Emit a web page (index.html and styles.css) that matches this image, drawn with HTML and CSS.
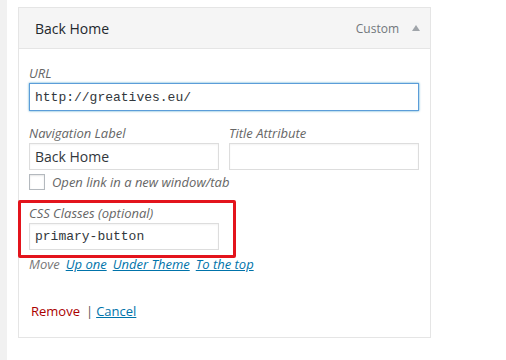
FILE: index.html
```html
<!DOCTYPE html>
<html lang="en">
<head>
    <meta charset="UTF-8">
    <meta name="viewport" content="width=device-width, initial-scale=1.0">
    <title>Menu Item</title>
    <link rel="stylesheet" href="styles.css">
</head>
<body>
    <div class="page">
        <div class="menu-item">
            <div class="item-bar">
                <span class="item-title">Back Home</span>
                <span class="item-controls">
                    <span class="item-type">Custom</span>
                    <span class="item-arrow"></span>
                </span>
            </div>

            <div class="item-settings">
                <div class="field field-wide">
                    <label class="field-label">URL</label>
                    <input type="text" class="field-input mono focused" value="http://greatives.eu/">
                </div>

                <div class="field-row">
                    <div class="field">
                        <label class="field-label">Navigation Label</label>
                        <input type="text" class="field-input" value="Back Home">
                    </div>
                    <div class="field">
                        <label class="field-label">Title Attribute</label>
                        <input type="text" class="field-input" value="">
                    </div>
                </div>

                <label class="check-line">
                    <span class="checkbox"></span>
                    <span>Open link in a new window/tab</span>
                </label>

                <div class="highlight">
                    <label class="field-label">CSS Classes (optional)</label>
                    <input type="text" class="field-input mono" value="primary-button">
                </div>

                <div class="move-line">
                    <span class="move-label">Move</span>
                    <a href="#">Up one</a>
                    <a href="#">Under Theme</a>
                    <a href="#">To the top</a>
                </div>

                <div class="actions">
                    <a href="#" class="remove">Remove</a>
                    <span class="sep">|</span>
                    <a href="#" class="cancel">Cancel</a>
                </div>
            </div>
        </div>
    </div>
</body>
</html>
```

FILE: styles.css
```css
* {
    box-sizing: border-box;
    margin: 0;
    padding: 0;
}

body {
    background-color: #f1f1f1;
    font-family: "Open Sans", sans-serif;
    color: #444;
}

.page {
    margin-left: 7px;
    min-height: 100vh;
    background-color: #fff;
    padding: 7px 0 0 11px;
}

.menu-item {
    width: 413px;
    height: 331px;
    border: 1px solid #e5e5e5;
    background-color: #fff;
}

/* header bar */
.item-bar {
    display: flex;
    justify-content: space-between;
    align-items: center;
    height: 41px;
    padding: 0 10px 0 16px;
    background-color: #f5f5f5;
    border-bottom: 1px solid #e5e5e5;
}

.item-title {
    font-size: 14px;
    color: #23282d;
}

.item-controls {
    display: flex;
    align-items: center;
    gap: 13px;
}

.item-type {
    font-size: 12px;
    color: #72777c;
}

.item-arrow {
    width: 0;
    height: 0;
    border-left: 4px solid transparent;
    border-right: 4px solid transparent;
    border-bottom: 6px solid #a0a5aa;
    margin-top: -1px;
}

/* settings */
.item-settings {
    padding: 15px 10px 10px 10px;
}

.field-label {
    display: block;
    font-size: 13px;
    font-style: italic;
    color: #666;
    line-height: 18px;
    margin-bottom: 1px;
}

.field-input {
    display: block;
    width: 190px;
    height: 27px;
    border: 1px solid #ddd;
    padding: 0 5px;
    font-family: "Open Sans", sans-serif;
    font-size: 14px;
    color: #32373c;
    background-color: #fff;
    box-shadow: inset 0 1px 2px rgba(0, 0, 0, 0.05);
    outline: none;
}

.field-wide .field-input {
    width: 390px;
    height: 28px;
}

.mono {
    font-family: "Liberation Mono", monospace;
    font-size: 13px;
}

.focused {
    border-color: #5b9dd9;
    box-shadow: 0 0 2px rgba(30, 140, 190, 0.8);
}

.field-row {
    display: flex;
    gap: 10px;
    margin-top: 13px;
}

.check-line {
    display: flex;
    align-items: center;
    gap: 7px;
    height: 18px;
    margin-top: 3px;
    font-size: 13px;
    font-style: italic;
    color: #666;
}

.checkbox {
    width: 16px;
    height: 16px;
    border: 1px solid #b4b9be;
    background-color: #fff;
    box-shadow: inset 0 1px 2px rgba(0, 0, 0, 0.1);
}

/* red annotation box */
.highlight {
    width: 218px;
    margin: 9px 0 0 -11px;
    padding: 1px 0 5px 8px;
    border: 3px solid #e3141c;
    border-radius: 2px;
}

.move-line {
    display: flex;
    gap: 6px;
    margin-top: -3px;
    font-size: 13px;
    font-style: italic;
    line-height: 18px;
}

.move-label {
    color: #777;
}

a {
    color: #0073aa;
}

.actions {
    display: flex;
    align-items: center;
    gap: 6px;
    margin-top: 29px;
    padding-left: 2px;
    font-size: 13px;
    line-height: 18px;
}

.remove {
    color: #a00;
    text-decoration: none;
}

.sep {
    color: #555;
    margin-right: -3px;
}

.cancel {
    color: #0073aa;
}
```
